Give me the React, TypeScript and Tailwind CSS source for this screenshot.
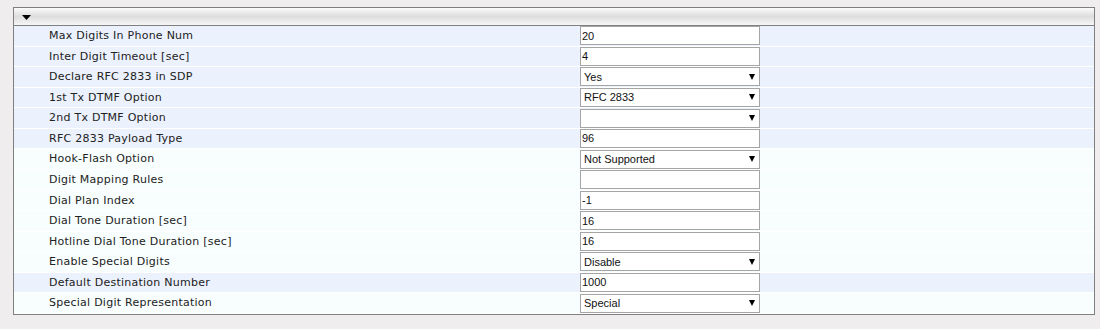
import React from 'react'

type Row = {
  label: string
  value: string
  kind: 'text' | 'select'
  tone: 'blue' | 'white'
}

const rows: Row[] = [
  { label: 'Max Digits In Phone Num', value: '20', kind: 'text', tone: 'blue' },
  { label: 'Inter Digit Timeout [sec]', value: '4', kind: 'text', tone: 'blue' },
  { label: 'Declare RFC 2833 in SDP', value: 'Yes', kind: 'select', tone: 'blue' },
  { label: '1st Tx DTMF Option', value: 'RFC 2833', kind: 'select', tone: 'blue' },
  { label: '2nd Tx DTMF Option', value: '', kind: 'select', tone: 'blue' },
  { label: 'RFC 2833 Payload Type', value: '96', kind: 'text', tone: 'blue' },
  { label: 'Hook-Flash Option', value: 'Not Supported', kind: 'select', tone: 'white' },
  { label: 'Digit Mapping Rules', value: '', kind: 'text', tone: 'white' },
  { label: 'Dial Plan Index', value: '-1', kind: 'text', tone: 'white' },
  { label: 'Dial Tone Duration [sec]', value: '16', kind: 'text', tone: 'white' },
  { label: 'Hotline Dial Tone Duration [sec]', value: '16', kind: 'text', tone: 'white' },
  { label: 'Enable Special Digits', value: 'Disable', kind: 'select', tone: 'white' },
  { label: 'Default Destination Number', value: '1000', kind: 'text', tone: 'blue' },
  { label: 'Special Digit Representation', value: 'Special', kind: 'select', tone: 'white' },
]

const Field = ({ row }: { row: Row }) => {
  if (row.kind === 'select') {
    return (
      <div className="flex h-[19px] w-[180px] items-center justify-between border border-[#a5a5a5] bg-white pl-[3px] pr-[4px] font-['Liberation_Sans',Arial,sans-serif] text-[11px] text-[#111]">
        <span>{row.value}</span>
        <svg width="6" height="6" viewBox="0 0 6 6">
          <path d="M0 0 H6 L3 6 Z" fill="#000" />
        </svg>
      </div>
    )
  }
  return (
    <div className="flex h-[19px] w-[180px] items-center border border-[#a5a5a5] bg-white pl-[1px] font-['Liberation_Sans',Arial,sans-serif] text-[11px] text-[#111]">
      {row.value}
    </div>
  )
}

export default function App() {
  return (
    <div className="min-h-[329px] w-[1100px] bg-[#efeded] pl-[13px] pt-[7px]">
      <div className="w-[1082px] border border-[#808080] bg-[#f8fefe]">
        {/* header */}
        <div className="flex h-[18px] items-center border-b border-[#808080] bg-gradient-to-b from-[#fbfbfb] via-[#dddddd] to-[#f6f6f6] pl-[8px]">
          <svg width="9" height="5" viewBox="0 0 9 5" className="mt-[2px]">
            <path d="M0 0 H9 L4.5 5 Z" fill="#000" />
          </svg>
        </div>

        {rows.map((row) => (
          <div
            key={row.label}
            className={`flex h-[20.57px] items-center border-b border-white ${
              row.tone === 'blue' ? 'bg-[#ebf1fd]' : 'bg-[#f8fefe]'
            }`}
          >
            <div className="w-[566px] pl-[35px] pt-[1px] font-['DejaVu_Sans',Verdana,sans-serif] text-[11px] tracking-[0.25px] text-[#222]">
              {row.label}
            </div>
            <Field row={row} />
          </div>
        ))}
      </div>
    </div>
  )
}
